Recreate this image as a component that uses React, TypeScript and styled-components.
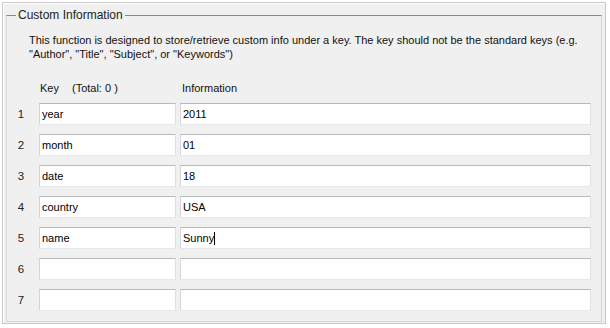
import React from 'react';
import styled, { createGlobalStyle } from 'styled-components';

const GlobalStyle = createGlobalStyle`
  html, body {
    margin: 0;
    padding: 0;
    background: #ffffff;
  }
  body {
    font-family: "Liberation Sans", Arial, sans-serif;
    font-size: 11px;
    color: #000;
  }
`;

const Frame = styled.div`
  margin: 2px 0 0 2px;
  width: 604px;
  height: 322px;
  border: 1px solid #c9c9c9;
  background: #f0f0f0;
  padding: 6px 3px 2px 3px;
  box-sizing: border-box;
  box-shadow: inset 1px 1px 0 #ffffff;
`;

const GroupBox = styled.fieldset`
  margin: 0;
  padding: 0;
  height: 313px;
  box-sizing: border-box;
  border: 1px solid #d5d9dd;
  border-top-color: #6f8fb3;
  min-width: 0;
`;

const Title = styled.legend`
  margin-left: 9px;
  padding: 0 2px;
  font-size: 12px;
  line-height: 13px;
  color: #1e1e1e;
`;

const Body = styled.div`
  padding: 11px 0 0 0;
`;

const Note = styled.p`
  margin: 0 0 0 22px;
  line-height: 14px;
  font-size: 11px;
  color: #111;
  white-space: nowrap;
`;

const Table = styled.div`
  display: grid;
  grid-template-columns: 28px 137px 411px;
  column-gap: 4px;
  row-gap: 9px;
  margin-top: 20px;
`;

const HeadCell = styled.div<{ $pad: number }>`
  padding-left: ${p => p.$pad}px;
  font-size: 11px;
  line-height: 14px;
  color: #111;
  margin-bottom: -1px;
  white-space: pre;
`;

const Total = styled.span`
  margin-left: 13px;
`;

const RowNum = styled.div`
  text-align: center;
  line-height: 22px;
  font-size: 11.5px;
  color: #222;
`;

const Field = styled.div`
  height: 22px;
  box-sizing: border-box;
  background: #ffffff;
  border: 1px solid;
  border-color: #b5b8bd #dcdfe3 #e6e8eb #d3d6da;
  padding: 0 2px;
  font-size: 11px;
  line-height: 20px;
  color: #000;
  white-space: nowrap;
  overflow: hidden;
`;

const Caret = styled.span`
  display: inline-block;
  width: 1px;
  height: 13px;
  background: #000;
  vertical-align: -3px;
`;

const rows = [
  { key: 'year', info: '2011' },
  { key: 'month', info: '01' },
  { key: 'date', info: '18' },
  { key: 'country', info: 'USA' },
  { key: 'name', info: 'Sunny', focused: true },
  { key: '', info: '' },
  { key: '', info: '' },
];

export default function App() {
  return (
    <>
      <GlobalStyle />
      <Frame>
        <GroupBox>
          <Title>Custom Information</Title>
          <Body>
            <Note>
              This function is designed to store/retrieve custom info under a key. The key should not be the standard keys (e.g.
              <br />
              "Author", "Title", "Subject", or "Keywords")
            </Note>
            <Table>
              <div />
              <HeadCell $pad={1}>
                Key<Total>(Total: 0 )</Total>
              </HeadCell>
              <HeadCell $pad={2}>Information</HeadCell>
              {rows.map((r, i) => (
                <React.Fragment key={i}>
                  <RowNum>{i + 1}</RowNum>
                  <Field>{r.key}</Field>
                  <Field>
                    {r.info}
                    {r.focused && <Caret />}
                  </Field>
                </React.Fragment>
              ))}
            </Table>
          </Body>
        </GroupBox>
      </Frame>
    </>
  );
}
